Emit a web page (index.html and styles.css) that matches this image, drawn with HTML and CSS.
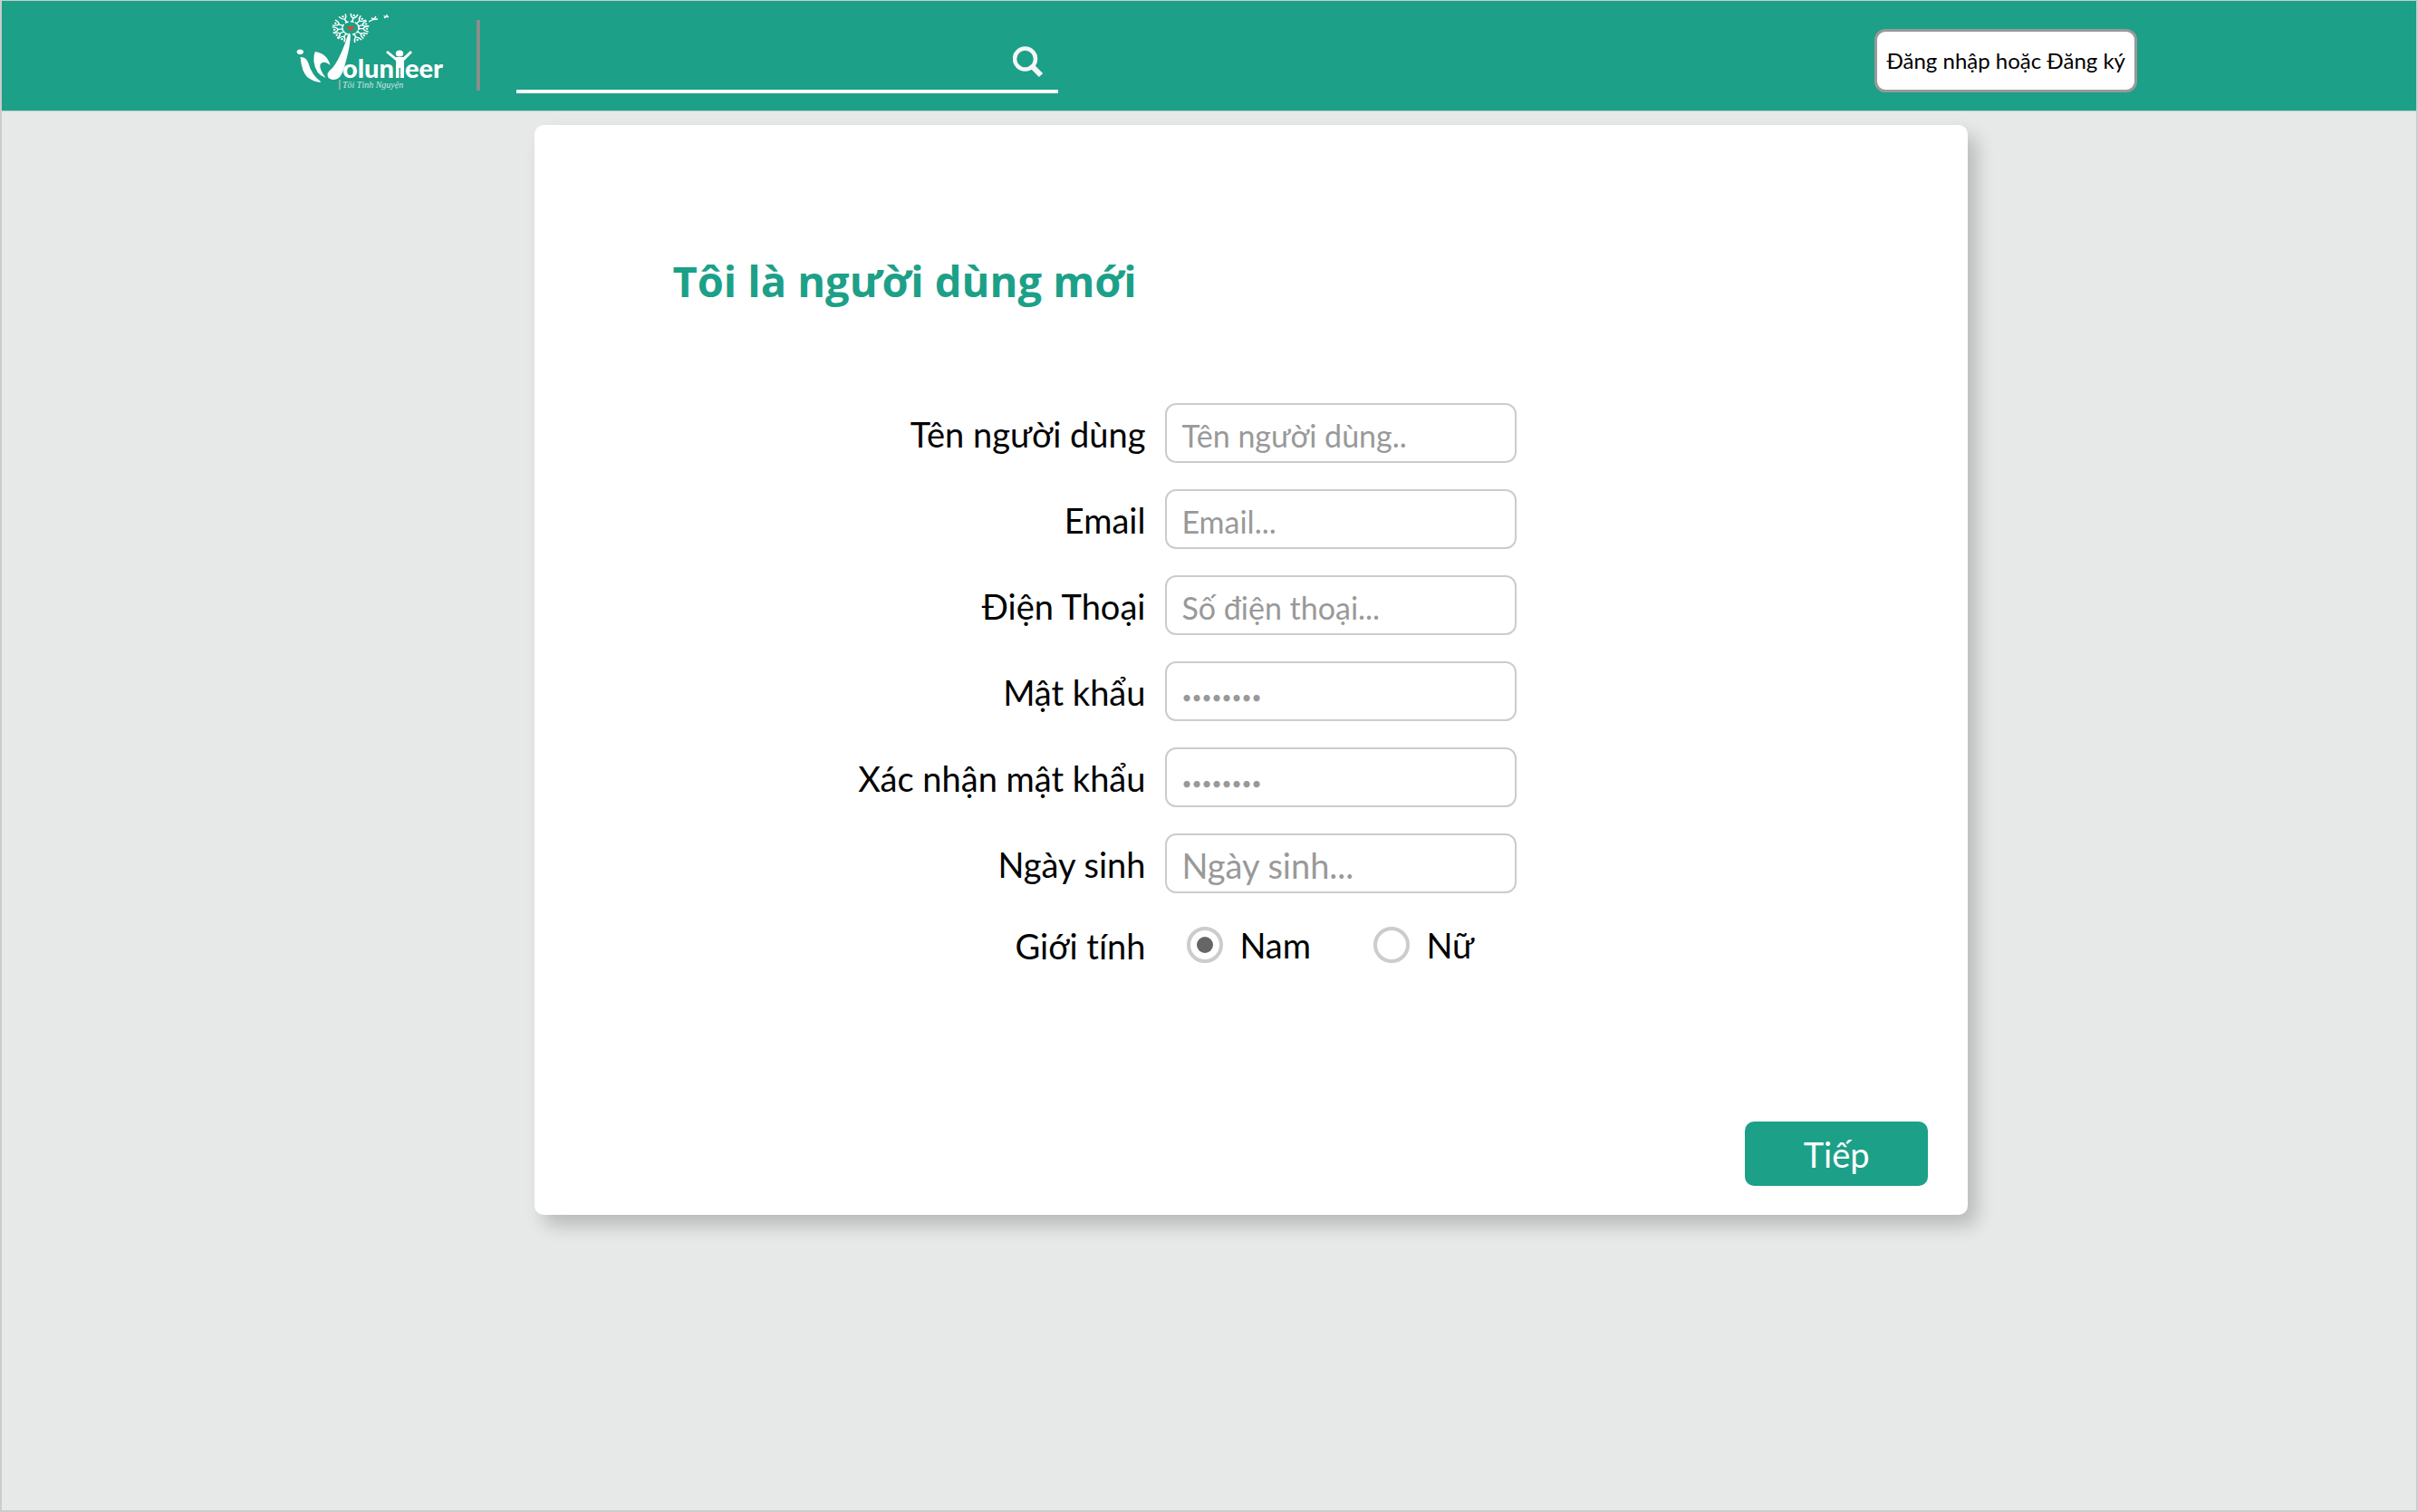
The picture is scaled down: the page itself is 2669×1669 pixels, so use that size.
FILE: index.html
```html
<!DOCTYPE html>
<html lang="vi">
<head>
<meta charset="utf-8">
<meta name="viewport" content="width=device-width, initial-scale=1">
<title>Volunteer</title>
<link rel="stylesheet" href="styles.css">
</head>
<body>
<header class="topbar">
  <a class="logo" href="#" aria-label="Volunteer">
    <svg class="logo-art" viewBox="310 10 190 95" width="190" height="95">
      <defs>
        <g id="seed">
          <path d="M0 -9V-14M-4 -20Q-3 -15 0 -14Q3 -15 4 -20M-2 -9H2" fill="none" stroke="#fff" stroke-width="1.600"/>
          <circle cx="0" cy="-18" r="1.300" fill="#fff"/>
        </g>
      </defs>
      <g transform="translate(387 31) scale(1 .8)">
        <use href="#seed" transform="rotate(12)"/>
        <use href="#seed" transform="rotate(45)"/>
        <use href="#seed" transform="rotate(72)"/>
        <use href="#seed" transform="rotate(93)"/>
        <use href="#seed" transform="rotate(124)"/>
        <use href="#seed" transform="rotate(155)"/>
        <use href="#seed" transform="rotate(212)"/>
        <use href="#seed" transform="rotate(238)"/>
        <use href="#seed" transform="rotate(263)"/>
        <use href="#seed" transform="rotate(292)"/>
        <use href="#seed" transform="rotate(332)"/>
      </g>
      <path d="M387 34L383.500 31Q383 28.500 385.500 29L387 30L389 29Q391.500 28.800 390.500 31.500Z" fill="#e8432e"/>
      <path d="M407 24L412 21.500L417 21M410 19.500L412.500 21.500L415 18M424 20L426 18.500L429 18.500M423.500 17.500L426 18.500L427.500 16" fill="none" stroke="#fff" stroke-width="1.300"/>
      <g fill="#fff">
        <ellipse cx="331.300" cy="57.300" rx="3.600" ry="2.800"/>
        <path d="M331.500 63Q338 62.500 340.500 70Q344 83 354.500 90.500Q348 91.500 339 85Q333 79 331.500 63Z"/>
        <path d="M348 57Q361 59 364.500 72Q357 66 353.500 71Q352 76 359.500 86Q348 82 346.500 68Q346 60 348 57Z"/>
        <path d="M384.500 37Q386.500 36 386.800 39Q387 48 382 67Q378 83 374 86Q368 90 362.500 86Q359 81 367 75Q376 64 384.500 37Z"/>
        <ellipse cx="441" cy="59" rx="4.200" ry="3.600"/>
        <path d="M426 58L428 56L436.500 63H445.500L453 56L455 58L446 67V86H442V75H440.500V86H437V67Z"/>
        <path d="M374 88H375.800V99H374Z" fill="#8fb5ac"/>
      </g>
      <text class="logo-name" x="378" y="86">olun</text>
      <text class="logo-name" x="447" y="86">eer</text>
      <text class="logo-tagline" x="378" y="97">Tôi Tình Nguyện</text>
    </svg>
  </a>
  <span class="divider"></span>
  <form class="search" role="search">
    <input class="search-input" type="search" aria-label="Tìm kiếm">
    <button class="search-button" type="button" aria-label="Tìm kiếm">
      <svg viewBox="0 0 34 36" width="34" height="36" fill="none" stroke="#f5f6f8">
        <circle cx="13.500" cy="14" r="11.500" stroke-width="4.500"/>
        <path d="M21.500 22.500L31 32" stroke-width="6"/>
      </svg>
    </button>
  </form>
  <button class="login" type="button">Đăng nhập hoặc Đăng ký</button>
</header>
<main class="page">
  <section class="card">
    <h1 class="title">Tôi là người dùng mới</h1>
    <form class="signup">
      <div class="field">
        <label class="label" for="username">Tên người dùng</label>
        <input class="input" id="username" type="text" placeholder="Tên người dùng..">
      </div>
      <div class="field">
        <label class="label" for="email">Email</label>
        <input class="input" id="email" type="email" placeholder="Email...">
      </div>
      <div class="field">
        <label class="label" for="phone">Điện Thoại</label>
        <input class="input" id="phone" type="tel" placeholder="Số điện thoại...">
      </div>
      <div class="field">
        <label class="label" for="password">Mật khẩu</label>
        <input class="input input-password" id="password" type="password" placeholder="••••••••">
      </div>
      <div class="field">
        <label class="label" for="confirm">Xác nhận mật khẩu</label>
        <input class="input input-password" id="confirm" type="password" placeholder="••••••••">
      </div>
      <div class="field">
        <label class="label" for="birthday">Ngày sinh</label>
        <input class="input input-date" id="birthday" type="text" placeholder="Ngày sinh...">
      </div>
      <div class="field" role="radiogroup" aria-labelledby="gender">
        <span class="label" id="gender">Giới tính</span>
        <div class="options">
          <label class="option"><input class="radio" type="radio" name="gender" checked>Nam</label>
          <label class="option"><input class="radio" type="radio" name="gender">Nữ</label>
        </div>
      </div>
      <button class="next" type="button">Tiếp</button>
    </form>
  </section>
</main>
</body>
</html>
```
FILE: styles.css
```css
* {
  box-sizing: border-box;
}

body {
  margin: 0;
  min-height: 100vh;
  border: 2px solid #cbcccb;
  border-top-width: 1px;
  background: #e7e9e8;
  color: #000;
  font-family: Lato, "Noto Sans", sans-serif;
  font-size: 38px;
  font-variant-ligatures: none;
}

button,
input {
  font-family: inherit;
  font-size: inherit;
}

.topbar {
  display: flex;
  align-items: center;
  min-height: 122px;
  padding: 0 11.55%;
  border-bottom: 1px solid #b9cfca;
  background: #1ca088;
}

.logo {
  flex: none;
  margin: 0 26px 8px 0;
}

.logo-art {
  display: block;
}

.logo-name {
  fill: #fff;
  font-family: "Liberation Sans Narrow", Lato, sans-serif;
  font-size: 29px;
  font-weight: 900;
}

.logo-tagline {
  fill: #d5e6e2;
  font-family: "Liberation Serif", serif;
  font-size: 10px;
  font-style: italic;
}

.divider {
  flex: none;
  width: 4px;
  height: 78px;
  margin-bottom: 2px;
  background: #8c8c8c;
}

.search {
  display: flex;
  align-items: center;
  flex: 0 1 598px;
  height: 72px;
  margin: 10px auto 0 40px;
  padding: 8px 16px 0 0;
  border-bottom: 4px solid #fff;
}

.search-input {
  flex: 1;
  min-width: 0;
  border: 0;
  outline: 0;
  background: none;
  color: #fff;
  font-size: 34px;
}

.search-button {
  display: flex;
  padding: 0;
  border: 0;
  background: none;
}

.login {
  flex: none;
  width: 290px;
  height: 70px;
  margin-top: 10px;
  padding: 0;
  border: 3px solid #999;
  border-radius: 12px;
  background: #fff;
  color: #000;
  font-size: 24px;
}

.page {
  padding: 15px 18.57% 48px 22.08%;
}

.card {
  padding: 140px 44px 32px 152px;
  border-radius: 10px;
  background: #fff;
  box-shadow: 10px 12px 20px rgba(0, 0, 0, 0.2);
}

.title {
  margin: 0 0 103px;
  color: #1ca088;
  font-family: "Open Sans", sans-serif;
  font-size: 47px;
  font-weight: 700;
  line-height: 64px;
}

.signup {
  display: flex;
  flex-direction: column;
  gap: 29px;
}

.field {
  display: grid;
  grid-template-columns: minmax(auto, 522px) minmax(auto, 388px);
  gap: 22px;
  align-items: center;
}

.label {
  padding-top: 2px;
  text-align: right;
}

.input {
  width: 100%;
  height: 66px;
  padding: 4px 16px 0;
  border: 2px solid #ccc;
  border-radius: 12px;
  background: #fff;
  color: #000;
  font-size: 34px;
}

.input::placeholder {
  color: #999;
  opacity: 1;
}

.input-password {
  padding-top: 12px;
  font-size: 19px;
}

.input-date {
  font-size: 38px;
}

.options {
  display: grid;
  grid-template-columns: 206px auto;
  height: 56px;
  padding-left: 24px;
}

.option {
  display: flex;
  align-items: center;
  gap: 18px;
}

.radio {
  display: grid;
  place-items: center;
  appearance: none;
  width: 40px;
  height: 40px;
  margin: 0;
  border: 4px solid #ccc;
  border-radius: 50%;
}

.radio:checked::before {
  content: "";
  width: 18px;
  height: 18px;
  border-radius: 50%;
  background: #666;
}

.next {
  align-self: flex-end;
  width: 202px;
  height: 71px;
  margin-top: 138px;
  padding: 0;
  border: 0;
  border-radius: 10px;
  background: #1ca088;
  color: #fff;
}
```
